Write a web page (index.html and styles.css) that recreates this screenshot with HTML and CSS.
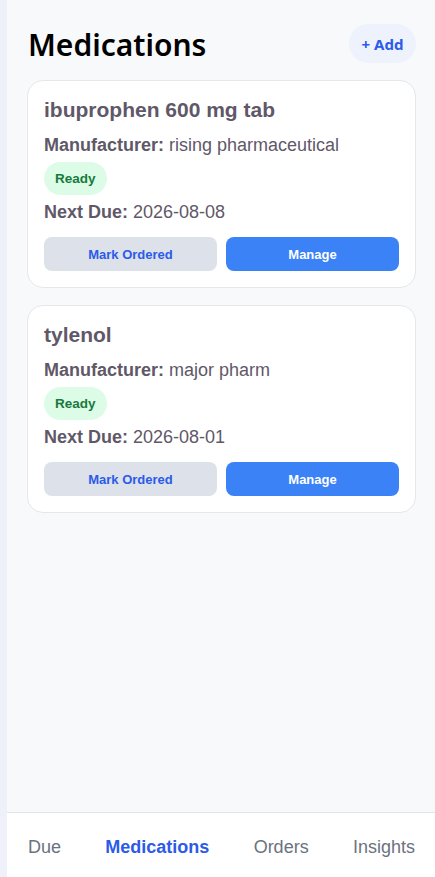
FILE: index.html
```html
<!DOCTYPE html>
<html lang="en">
<head>
<meta charset="utf-8">
<title>Medications</title>
<link rel="stylesheet" href="styles.css">
</head>
<body>
<div class="app">
  <main class="content">
    <header class="page-header">
      <h1 class="page-title">Medications</h1>
      <button class="add-btn">+ Add</button>
    </header>
    <section class="card">
      <h3 class="med-name">ibuprophen 600 mg tab</h3>
      <p class="row"><strong>Manufacturer:</strong> rising pharmaceutical</p>
      <span class="badge">Ready</span>
      <p class="row"><strong>Next Due:</strong> 2026-08-08</p>
      <div class="actions">
        <button class="btn btn-secondary">Mark Ordered</button>
        <button class="btn btn-primary">Manage</button>
      </div>
    </section>
    <section class="card">
      <h3 class="med-name">tylenol</h3>
      <p class="row"><strong>Manufacturer:</strong> major pharm</p>
      <span class="badge">Ready</span>
      <p class="row"><strong>Next Due:</strong> 2026-08-01</p>
      <div class="actions">
        <button class="btn btn-secondary">Mark Ordered</button>
        <button class="btn btn-primary">Manage</button>
      </div>
    </section>
  </main>
  <nav class="tabbar">
    <a class="tab">Due</a>
    <a class="tab active">Medications</a>
    <a class="tab">Orders</a>
    <a class="tab">Insights</a>
  </nav>
</div>
</body>
</html>
```
FILE: styles.css
```css
* { box-sizing: border-box; }
html, body { margin: 0; padding: 0; }
body {
  background: #eef1f9;
  font-family: "Liberation Sans", Arial, sans-serif;
  font-size: 18px;
}
.app {
  margin-left: 7px;
  min-height: 877px;
  background: #f8f9fb;
  display: flex;
  flex-direction: column;
}
.content {
  flex: 1;
  padding: 24px 19px 0 20px;
  display: flex;
  flex-direction: column;
  gap: 17px;
}
.page-header {
  display: flex;
  align-items: center;
  justify-content: space-between;
  margin-bottom: 0;
}
.page-title {
  margin: 0;
  font-family: "Noto Sans", sans-serif;
  font-weight: 600;
  font-size: 30px;
  color: #000;
  line-height: 1;
  padding-left: 1px;
  margin-top: 2px;
}
.add-btn {
  border: none;
  background: #eef2fd;
  color: #2b5be8;
  font-family: "Noto Sans", sans-serif;
  font-weight: 700;
  font-size: 15px;
  height: 39px;
  width: 67px;
  border-radius: 20px;
  padding: 0;
}
.card {
  background: #fff;
  border: 1px solid #e5e7eb;
  border-radius: 16px;
  padding: 17px 16px 16px 16px;
  display: flex;
  flex-direction: column;
  align-items: flex-start;
  color: #5f5868;
}
.med-name {
  margin: 0;
  font-size: 21px;
  font-weight: 700;
  line-height: 24px;
}
.row {
  margin: 0;
  font-size: 18px;
  line-height: 22px;
}
.card .med-name + .row { margin-top: 12px; }
.badge {
  margin-top: 6px;
  background: #dcfce7;
  color: #177a3c;
  font-weight: 700;
  font-size: 13.5px;
  height: 33px;
  line-height: 33px;
  padding: 0 11px;
  border-radius: 17px;
}
.badge + .row { margin-top: 6px; }
.actions {
  margin-top: 14px;
  width: 100%;
  display: grid;
  grid-template-columns: 1fr 1fr;
  gap: 9px;
}
.btn {
  border: none;
  height: 34px;
  border-radius: 8px;
  font-family: "Liberation Sans", Arial, sans-serif;
  font-weight: 700;
  font-size: 13px;
  padding: 0;
}
.btn-secondary { background: #dde1ea; color: #2b5be8; }
.btn-primary { background: #3b82f6; color: #fff; }
.tabbar {
  border-top: 1px solid #e2e4e8;
  background: #fff;
  height: 65px;
  display: flex;
  align-items: center;
  justify-content: space-between;
  padding: 0 20px 0 21px;
}
.tab {
  font-size: 18px;
  color: #6b7280;
  line-height: 21px;
  margin-top: 4px;
}
.tab.active { color: #2b5be8; font-weight: 700; }
```
